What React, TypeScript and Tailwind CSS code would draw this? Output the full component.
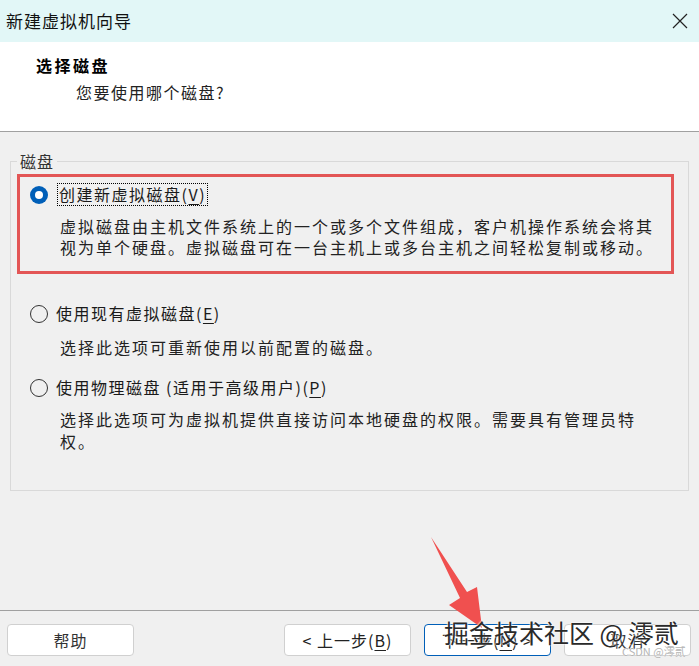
const Radio = ({ checked }: { checked?: boolean }) =>
  checked ? (
    <span className="flex h-[18px] w-[18px] shrink-0 items-center justify-center rounded-full bg-[#005fb8]">
      <span className="h-[8px] w-[8px] rounded-full bg-white" />
    </span>
  ) : (
    <span className="h-[18px] w-[18px] shrink-0 rounded-full border border-[#333333] bg-transparent" />
  );

const Key = ({ k }: { k: string }) => <u className="underline-offset-[3px]">{k}</u>;

export default function App() {
  return (
    <div className="relative flex h-[666px] w-[699px] flex-col overflow-hidden bg-[#f0f0f0] font-['Noto_Sans_CJK_SC','Noto_Sans',sans-serif] text-[#1a1a1a]">
      {/* title bar */}
      <div className="flex h-[42px] items-center justify-between bg-[#e2f7f7] pl-[6px] pr-[11px]">
        <span className="text-[17px] tracking-[1px] text-[#111]">新建虚拟机向导</span>
        <svg width="16" height="16" viewBox="0 0 16 16" className="text-[#222]">
          <path d="M1 1 L15 15 M15 1 L1 15" stroke="currentColor" strokeWidth="1.2" fill="none" />
        </svg>
      </div>

      {/* header */}
      <div className="h-[90px] border-b border-[#a0a0a0] bg-white pl-[36px] pt-[12px]">
        <div className="text-[16px] font-bold leading-[22px] tracking-[2.5px] text-black">选择磁盘</div>
        <div className="mt-[5px] pl-[40px] text-[16px] leading-[22px] tracking-[1.5px] text-[#222]">
          您要使用哪个磁盘?
        </div>
      </div>

      {/* body */}
      <div className="flex-1 pt-[18px]">
        <fieldset className="mx-[10px] h-[341px] border border-[#d9d9d9] px-[6px]">
          <legend className="px-[3px] text-[16px] leading-[22px] tracking-[1px] text-[#333]">磁盘</legend>

          <div className="mt-[2px] w-[657px] border-[3px] border-[#e35656] pb-[13px] pl-[10px] pt-[6px]">
            <div className="flex h-[23px] items-center">
              <Radio checked />
              <span className="ml-[9px] border border-dotted border-black px-[1px] text-[16px] leading-[21px] tracking-[1.5px]">
                创建新虚拟磁盘(<Key k="V" />)
              </span>
            </div>
            <div className="mt-[10px] whitespace-nowrap pl-[30px] text-[16px] leading-[21px] tracking-[2px] text-[#222]">
              <div>虚拟磁盘由主机文件系统上的一个或多个文件组成，客户机操作系统会将其</div>
              <div>视为单个硬盘。虚拟磁盘可在一台主机上或多台主机之间轻松复制或移动。</div>
            </div>
          </div>

          <div className="mt-[28px] flex h-[23px] items-center pl-[13px]">
            <Radio />
            <span className="ml-[8px] text-[16px] leading-[21px] tracking-[1.5px]">
              使用现有虚拟磁盘(<Key k="E" />)
            </span>
          </div>
          <div className="mt-[11px] whitespace-nowrap pl-[43px] text-[16px] leading-[22px] tracking-[2px] text-[#222]">
            选择此选项可重新使用以前配置的磁盘。
          </div>

          <div className="mt-[18px] flex h-[23px] items-center pl-[13px]">
            <Radio />
            <span className="ml-[8px] text-[16px] leading-[21px] tracking-[1.5px]">
              使用物理磁盘 (适用于高级用户)(<Key k="P" />)
            </span>
          </div>
          <div className="mt-[9px] whitespace-nowrap pl-[43px] text-[16px] leading-[22px] tracking-[2px] text-[#222]">
            <div>选择此选项可为虚拟机提供直接访问本地硬盘的权限。需要具有管理员特</div>
            <div>权。</div>
          </div>
        </fieldset>
      </div>

      {/* footer */}
      <div className="flex h-[56px] items-start justify-between border-t border-[#a0a0a0] pl-[7px] pr-[8px] pt-[13px]">
        <button className="h-[32px] w-[127px] rounded-[4px] border border-[#d0d0d0] bg-white text-[16px] tracking-[1px] text-[#333]">
          帮助
        </button>
        <div className="flex gap-[13px]">
          <button className="h-[32px] w-[127px] rounded-[4px] border border-[#d0d0d0] bg-white text-[16px] tracking-[1px] text-[#222]">
            &lt; 上一步(<Key k="B" />)
          </button>
          <button className="h-[32px] w-[127px] rounded-[4px] border border-[#005fb8] bg-white text-[16px] tracking-[1px] text-[#222]">
            下一步(<Key k="N" />) &gt;
          </button>
          <button className="h-[32px] w-[127px] rounded-[4px] border border-[#d0d0d0] bg-white text-[16px] tracking-[1px] text-[#333]">
            取消
          </button>
        </div>
      </div>

      {/* annotation arrow */}
      <svg className="pointer-events-none absolute inset-0" width="699" height="666" viewBox="0 0 699 666">
        <polygon points="431,537 467,592 477,587 482,628 449,605 460,598" fill="#f0504f" />
      </svg>

      {/* watermarks */}
      <div className="pointer-events-none absolute left-[444px] top-[614px] whitespace-nowrap text-[25px] leading-[36px] text-[#2a2a2a] [text-shadow:0_0_2px_#fff,0_0_2px_#fff]">
        掘金技术社区 @ 澪贰
      </div>
      <div className="pointer-events-none absolute left-[622px] top-[643px] whitespace-nowrap text-[11px] leading-[16px] text-[#b5b5b5] [text-shadow:0_0_1px_#fff]">
        CSDN @澪贰
      </div>
    </div>
  );
}
